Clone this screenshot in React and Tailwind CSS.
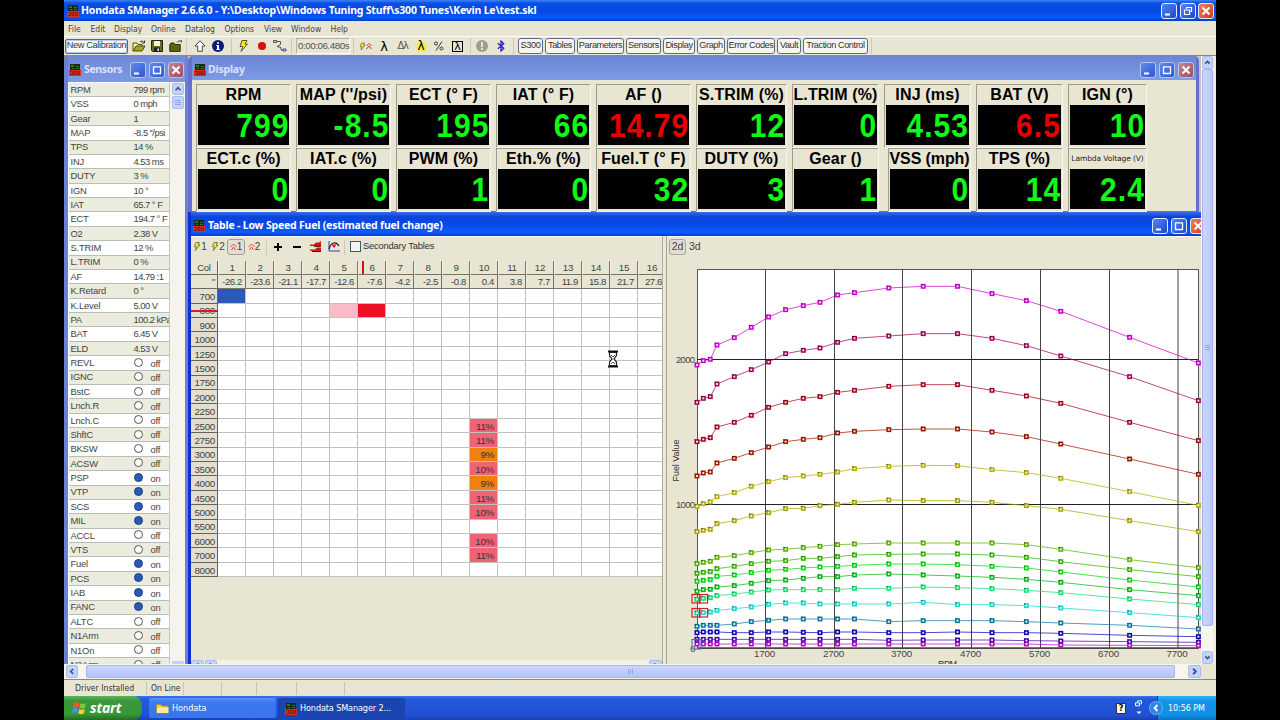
import React from "react";

const menus = [
  { label: "File", width: "w-[22.5px]" },
  { label: "Edit", width: "w-[23.5px]" },
  { label: "Display", width: "w-[37px]" },
  { label: "Online", width: "w-[34px]" },
  { label: "Datalog", width: "w-[39.5px]" },
  { label: "Options", width: "w-[39.5px]" },
  { label: "View", width: "w-[27px]" },
  { label: "Window", width: "w-[39.5px]" },
  { label: "Help", width: "w-[30px]" },
];

const toolButtons = [
  { label: "S300", width: "w-[25px]" },
  { label: "Tables", width: "w-[30px]" },
  { label: "Parameters", width: "w-[47px]" },
  { label: "Sensors", width: "w-[35px]" },
  { label: "Display", width: "w-[32px]" },
  { label: "Graph", width: "w-[28px]" },
  { label: "Error Codes", width: "w-[48px]" },
  { label: "Vault", width: "w-[24px]" },
  { label: "Traction Control", width: "w-[65px]" },
];

const sensors = [
  ["RPM", "799 rpm"],
  ["VSS", "0 mph"],
  ["Gear", "1"],
  ["MAP", "-8.5 ''/psi"],
  ["TPS", "14 %"],
  ["INJ", "4.53 ms"],
  ["DUTY", "3 %"],
  ["IGN", "10 °"],
  ["IAT", "65.7 ° F"],
  ["ECT", "194.7 ° F"],
  ["O2", "2.38 V"],
  ["S.TRIM", "12 %"],
  ["L.TRIM", "0 %"],
  ["AF", "14.79 :1"],
  ["K.Retard", "0 °"],
  ["K.Level", "5.00 V"],
  ["PA", "100.2 kPa"],
  ["BAT", "6.45 V"],
  ["ELD", "4.53 V"],
  ["REVL", false],
  ["IGNC", false],
  ["BstC", false],
  ["Lnch.R", false],
  ["Lnch.C", false],
  ["ShftC", false],
  ["BKSW", false],
  ["ACSW", false],
  ["PSP", true],
  ["VTP", true],
  ["SCS", true],
  ["MIL", true],
  ["ACCL", false],
  ["VTS", false],
  ["Fuel", true],
  ["PCS", true],
  ["IAB", true],
  ["FANC", true],
  ["ALTC", false],
  ["N1Arm", false],
  ["N1On", false],
  ["N2Arm", false],
];

// Each gauge column holds two readouts
const gauges = [
  { slot: "w-[100px]", box: "w-[95px]", items: [["RPM", "799"], ["ECT.c (%)", "0"]] },
  { slot: "w-[100px]", box: "w-[95px]", items: [["MAP (''/psi)", "-8.5"], ["IAT.c (%)", "0"]] },
  { slot: "w-[100px]", box: "w-[95px]", items: [["ECT (° F)", "195"], ["PWM (%)", "1"]] },
  { slot: "w-[100px]", box: "w-[95px]", items: [["IAT (° F)", "66"], ["Eth.% (%)", "0"]] },
  { slot: "w-[100px]", box: "w-[95px]", items: [["AF ()", "14.79", "red"], ["Fuel.T (° F)", "32"]] },
  { slot: "w-[96px]", box: "w-[91px]", items: [["S.TRIM (%)", "12"], ["DUTY (%)", "3"]] },
  { slot: "w-[92px]", box: "w-[87px]", items: [["L.TRIM (%)", "0"], ["Gear ()", "1"]] },
  { slot: "w-[92px]", box: "w-[87px]", items: [["INJ (ms)", "4.53"], ["VSS (mph)", "0"]] },
  { slot: "w-[92px]", box: "w-[87px]", items: [["BAT (V)", "6.5", "red"], ["TPS (%)", "14"]] },
  { slot: "w-[82px]", box: "w-[79px]", items: [["IGN (°)", "10"], ["Lambda Voltage (V)", "2.4"]] },
];

const loads = [
  "-26.2", "-23.6", "-21.1", "-17.7", "-12.6", "-7.6", "-4.2", "-2.5",
  "-0.8", "0.4", "3.8", "7.7", "11.9", "15.8", "21.7", "27.6",
];

const rpmRows = [
  700, 800, 900, 1000, 1250, 1500, 1750, 2000, 2250, 2500,
  2750, 3000, 3500, 4000, 4500, 5000, 5500, 6000, 7000, 8000,
];

const marked = {
  "700-1": { bg: "bg-[#2a5ab6]" },
  "800-5": { bg: "bg-[#f8bcc8]" },
  "800-6": { bg: "bg-[#ec1022]" },
  "2500-10": { bg: "bg-[#ee6474]", text: "11%" },
  "2750-10": { bg: "bg-[#ee6474]", text: "11%" },
  "3000-10": { bg: "bg-[#f08010]", text: "9%" },
  "3500-10": { bg: "bg-[#ee6474]", text: "10%" },
  "4000-10": { bg: "bg-[#f08010]", text: "9%" },
  "4500-10": { bg: "bg-[#ee6474]", text: "11%" },
  "5000-10": { bg: "bg-[#ee6474]", text: "10%" },
  "6000-10": { bg: "bg-[#ee6474]", text: "10%" },
  "7000-10": { bg: "bg-[#ee6474]", text: "11%" },
};

// Curve heights, in thirds of a pixel below `top`
const curves = [
  { color: "#c800d0", top: 230, v: [405, 392, 388, 345, 323, 292, 261, 239, 227, 217, 195, 188, 174, 169, 169, 191, 212, 244, 322, 399] },
  { color: "#a00058", top: 230, v: [517, 505, 500, 462, 440, 419, 396, 371, 361, 354, 337, 325, 318, 311, 311, 325, 347, 378, 440, 512] },
  { color: "#a80020", top: 230, v: [635, 628, 623, 591, 577, 556, 532, 517, 505, 500, 487, 481, 469, 464, 464, 481, 498, 520, 577, 632] },
  { color: "#a01400", top: 440, v: [108, 99, 96, 69, 55, 38, 21, 5, -2, -7, -21, -26, -31, -33, -33, -24, -10, 12, 57, 103] },
  { color: "#b4ac00", top: 440, v: [199, 191, 186, 170, 158, 139, 125, 113, 108, 103, 96, 86, 79, 76, 77, 89, 98, 115, 155, 196] },
  { color: "#a8a400", top: 440, v: [275, 271, 268, 251, 242, 228, 218, 206, 205, 197, 193, 187, 180, 182, 182, 187, 197, 208, 242, 275] },
  { color: "#58b000", top: 440, v: [371, 367, 364, 352, 347, 338, 330, 328, 323, 319, 314, 312, 309, 309, 309, 309, 314, 328, 359, 383] },
  { color: "#30b400", top: 440, v: [400, 397, 395, 386, 379, 371, 364, 362, 355, 355, 350, 345, 343, 342, 342, 345, 352, 365, 389, 410] },
  { color: "#00d810", top: 440, v: [424, 421, 419, 409, 405, 398, 391, 388, 384, 381, 379, 376, 372, 372, 374, 379, 384, 396, 420, 441] },
  { color: "#00b810", top: 440, v: [454, 449, 448, 441, 437, 430, 422, 420, 415, 410, 410, 405, 402, 405, 408, 412, 418, 427, 449, 467] },
  { color: "#10e070", top: 440, v: [478, 475, 473, 467, 462, 456, 450, 449, 449, 449, 449, 445, 445, 441, 443, 446, 451, 458, 477, 494] },
  { color: "#10d8d0", top: 440, v: [519, 518, 516, 511, 506, 501, 493, 489, 489, 492, 492, 492, 492, 487, 494, 494, 497, 504, 518, 533] },
  { color: "#0878a0", top: 440, v: [559, 556, 556, 556, 552, 545, 541, 537, 537, 537, 537, 537, 545, 542, 542, 542, 545, 549, 556, 567] },
  { color: "#0800c0", top: 440, v: [578, 576, 576, 576, 578, 578, 576, 576, 577, 578, 576, 576, 578, 578, 576, 578, 578, 580, 586, 590] },
  { color: "#4000b0", top: 440, v: [598, 598, 598, 598, 598, 598, 598, 598, 598, 598, 598, 598, 601, 600, 600, 600, 602, 603, 605, 607] },
  { color: "#b800c8", top: 440, v: [612, 612, 612, 612, 612, 612, 612, 612, 612, 612, 612, 612, 612, 612, 612, 612, 612, 615, 616, 617] },
];

const curveX = [
  697, 703.3, 710.3, 717, 734.3, 751.3, 768.6, 785.6, 803.3, 820,
  837.6, 854.5, 888.8, 923.2, 957.5, 992, 1026.4, 1060.8, 1129.6, 1198.4,
];

const xTicks = [
  [1700, 765.5],
  [2700, 834.5],
  [3700, 902.5],
  [4700, 971.5],
  [5700, 1040.5],
  [6700, 1109.5],
  [7700, 1178],
];

const AppIcon = ({ className = "w-3 h-3" }) => (
  <svg viewBox="0 0 12 12" className={`shrink-0 ${className}`}>
    <rect x="1" y="0" width="10" height="7" fill="#142c12" />
    <path d="M2 1h3v2H2zM7 2h3v1H7zM3 4h2v1H3zM7 4h3v1H7z" fill="#2c7430" />
    <rect x="0" y="6" width="12" height="6" fill="#d8301c" />
    <path d="M1 7.500h2.500v3H1M5 7.500h2v3H5zM8.500 7.500h2v3h-2z" fill="none" stroke="#7a1408" strokeWidth="0.8" />
  </svg>
);

const WinButton = ({ kind, dim }) => {
  const isClose = kind === "close";
  const color = isClose
    ? dim
      ? "from-[#c48494] to-[#a04c60]"
      : "from-[#ee8060] to-[#cc3a14]"
    : dim
      ? "from-[#6488ee] to-[#3058d0]"
      : "from-[#5484f4] to-[#1c48cc]";
  return (
    <div
      className={`w-4 h-4 shrink-0 rounded-[3px] border bg-gradient-to-br ${color} ${
        dim ? "border-[#b4c4f4]" : "border-[#e4ecfc]"
      }`}
    >
      <svg viewBox="0 0 14 14" className="w-full h-full" fill="none" stroke="#fff">
        {kind === "min" && <path d="M3 10.5h5" strokeWidth="2" />}
        {kind === "max" && <path d="M3 3.8h8M3.500 4v6.500h7V4" strokeWidth="1.300" />}
        {kind === "restore" && <path d="M5.500 5V3.500h5v4H9M3.500 6h5v4.500h-5z" strokeWidth="1.200" />}
        {isClose && <path d="M3.500 3.500l7 7M10.500 3.500l-7 7" strokeWidth="2" />}
      </svg>
    </div>
  );
};

const ScrollButton = ({ dir, className = "w-3 h-3" }) => {
  const paths = {
    up: "M3 7.5l3-3 3 3",
    down: "M3 4.5l3 3 3-3",
    left: "M7.5 3l-3 3 3 3",
    right: "M4.5 3l3 3-3 3",
  };
  return (
    <div className={`shrink-0 rounded-[2px] border border-[#a8bcf0] bg-[#c4d2fc] ${className}`}>
      <svg viewBox="0 0 12 12" className="w-full h-full" fill="none" stroke="#3c5290" strokeWidth="2">
        <path d={paths[dir]} />
      </svg>
    </div>
  );
};

const Slot = ({ width, children }) => (
  <div className={`flex h-full shrink-0 items-center justify-center ${width}`}>{children}</div>
);

const Sep = ({ width }) => (
  <Slot width={width}>
    <div className="h-4 w-px bg-[#cdc9b6]" />
  </Slot>
);

const Bolt = ({ className = "w-[11px] h-3" }) => (
  <svg viewBox="0 0 11 12" className={className}>
    <path d="M4 .5h5L7 4h2.500L3 11.500 4.800 6.500H2z" fill="#f6f000" stroke="#333" strokeWidth="0.8" />
  </svg>
);

const Folder = () => (
  <svg viewBox="0 0 14 12" className="w-[14px] h-3">
    <path d="M1 11V3h4l1 1.500h4V6" fill="#fbf6a0" stroke="#4c4c10" />
    <path d="M1 11l3-5h9l-3 5z" fill="#a8a418" stroke="#4c4c10" />
    <path d="M8 2c1.500-1.500 3-1 4 .5M12.500.5V3H10" fill="none" stroke="#222" strokeWidth="0.9" />
  </svg>
);

const Toolbar = () => (
  <div className="flex h-5 shrink-0 items-center border-t border-white border-b border-b-[#8c897c] font-['Liberation_Sans',Arial,sans-serif] text-[10px] text-[#333]">
    <div className="ml-px flex h-[15px] w-[63px] shrink-0 items-center justify-center whitespace-nowrap rounded-[2px] border border-[#3e6cb4] bg-[#fafaf8] text-[9.200px] tracking-[-0.350px] shadow-[inset_0_0_0_1px_#b4ccf4]">
      New Calibration
    </div>
    <div className="w-px shrink-0" />
    <Slot width="w-[19px]"><Folder /></Slot>
    <Slot width="w-[17px]">
      <svg viewBox="0 0 12 12" className="w-3 h-3">
        <path d="M.5.5h11v11H1.500l-1-1z" fill="#6a6c10" stroke="#222" />
        <rect x="3" y="1" width="6" height="5" fill="#eee" />
        <rect x="3" y="7.500" width="6" height="4" fill="#222" />
        <rect x="6.500" y="8.500" width="1.500" height="2.500" fill="#eee" />
      </svg>
    </Slot>
    <Slot width="w-[20px]">
      <svg viewBox="0 0 13 12" className="w-[13px] h-3">
        <path d="M.8 11.400V4.500L2 3h3l1 1.500h5.200v6.900z" fill="#5c6414" stroke="#2c300c" />
        <path d="M8 2.500C9 1 10 .8 12 1M12.300 0v2.600" fill="none" stroke="#333" strokeWidth="0.9" />
      </svg>
    </Slot>
    <Sep width="w-[3px]" />
    <Slot width="w-[23px]">
      <svg viewBox="0 0 12 12" className="w-3 h-3">
        <path d="M6 .8L11 6H8.300v5.300H3.700V6H1z" fill="#fff" stroke="#444" />
      </svg>
    </Slot>
    <Slot width="w-[14px]">
      <svg viewBox="0 0 12 12" className="w-3 h-3">
        <circle cx="6" cy="6" r="6" fill="#0a1a80" />
        <path d="M5 2.200h2v1.600H5zM4.300 5H7v4h1v1H4.300V9H5V6h-.7z" fill="#fff" />
      </svg>
    </Slot>
    <Sep width="w-[12px]" />
    <Slot width="w-[13px]"><Bolt /></Slot>
    <Slot width="w-[23px]"><div className="h-2 w-2 rounded-full bg-[#e00808]" /></Slot>
    <Slot width="w-[14px]">
      <svg viewBox="0 0 14 12" className="w-[14px] h-3" fill="none" stroke="#444" strokeWidth="0.9">
        <path d="M.5.5h3v2h-3zM3.500 1.500h4v3L4 6.500l4 1v2.500h2" />
        <path d="M10 9h3v2h-3z" stroke="#223a90" />
      </svg>
    </Slot>
    <Sep width="w-[9px]" />
    <div className="flex h-4 w-[54px] shrink-0 items-center whitespace-nowrap border border-[#b8b4a2] border-b-white border-r-white pl-px text-[9.800px] tracking-[-0.450px] text-[#555]">
      0:00:06.480s
    </div>
    <Sep width="w-[7px]" />
    <Slot width="w-[17px]">
      <Bolt className="w-[7px] h-[11px]" />
      <svg viewBox="0 0 6 8" className="w-[6px] h-2" fill="none" stroke="#d83030">
        <path d="M.5 4L3 1.500 5.500 4M.5 7L3 4l2.500 3" />
      </svg>
    </Slot>
    <Slot width="w-[20px]"><span className="font-['DejaVu_Sans',sans-serif] text-[13px] leading-none text-black">λ</span></Slot>
    <Slot width="w-[17px]"><span className="font-['DejaVu_Sans',sans-serif] text-[10px] leading-none tracking-[-1.500px] text-[#555]">Δλ</span></Slot>
    <Slot width="w-[20px]">
      <span className="flex h-[11px] w-[11px] items-center justify-center rounded-full bg-[#f2ee50] font-['DejaVu_Sans',sans-serif] text-[12px] leading-none text-black">λ</span>
    </Slot>
    <Slot width="w-[15px]">
      <svg viewBox="0 0 10 10" className="h-2.5 w-2.5" fill="none" stroke="#333">
        <circle cx="2" cy="2.500" r="1.500" /><path d="M8 .5l-6 9" /><circle cx="7.500" cy="7.500" r="1.500" />
      </svg>
    </Slot>
    <Slot width="w-[23px]">
      <span className="flex h-[11px] w-[11px] items-center justify-center border border-black font-['DejaVu_Sans',sans-serif] text-[11px] leading-none text-black">λ</span>
    </Slot>
    <Sep width="w-[3px]" />
    <Slot width="w-[20px]">
      <svg viewBox="0 0 12 12" className="w-3 h-3">
        <circle cx="6" cy="6" r="6" fill="#a09e94" />
        <path d="M5 2h2v5H5zM5 8h2v2H5z" fill="#e8e4d6" />
      </svg>
    </Slot>
    <Slot width="w-[17px]">
      <svg viewBox="0 0 8 12" className="h-3 w-2" fill="none" stroke="#1c1cc0" strokeWidth="1.200">
        <path d="M.8 3.200l6 5L4 11V1l2.800 2.800-6 5" />
      </svg>
    </Slot>
    <Sep width="w-2" />
    <div className="flex shrink-0 gap-[2px] pl-px">
      {toolButtons.map((b) => (
        <div
          key={b.label}
          className={`flex h-4 shrink-0 items-center justify-center whitespace-nowrap rounded-[3px] border border-[#5a6c84] bg-[#f6f5ef] text-[9.200px] tracking-[-0.420px] ${b.width}`}
        >
          {b.label}
        </div>
      ))}
    </div>
    <Sep width="w-[7px]" />
  </div>
);

const SensorsWindow = () => (
  <section className="flex h-full w-[124px] shrink-0 flex-col overflow-hidden rounded-t-[5px] bg-[#6c80d6] pl-1 pr-[3px]">
    <div className="flex h-[26px] shrink-0 items-center bg-gradient-to-b from-[#7088d8] to-[#7c98e4] pl-[1px] pt-[2px]">
      <AppIcon className="h-[12px] w-[12px]" />
      <span className="ml-[3px] w-[46px] font-['Noto_Sans',sans-serif] text-[10.500px] font-bold tracking-[-0.350px] text-[#dbe3fa]">Sensors</span>
      <div className="flex gap-[3px]">
        <WinButton kind="min" dim />
        <WinButton kind="max" dim />
        <WinButton kind="close" dim />
      </div>
    </div>
    <div className="flex min-h-0 flex-1 bg-white">
      <div className="w-[102px] shrink-0 overflow-hidden border-r border-[#c8c8c0] pl-px pt-[1px] font-['Liberation_Sans',Arial,sans-serif] text-[9.400px] leading-none tracking-[-0.200px] text-[#444]">
        {sensors.map(([name, value], i) => (
          <div
            key={name}
            className={`flex h-[14.390px] items-center whitespace-nowrap border-b border-[#bcbcb6] pl-[1.500px] ${
              i % 2 === 0 ? "bg-[#ebecdd]" : "bg-white"
            }`}
          >
            <span className="w-[63px] shrink-0">{name}</span>
            {typeof value === "string" ? (
              <span className="tracking-[-0.500px]">{value}</span>
            ) : (
              <>
                <span
                  className={`mb-px h-[9px] w-[9px] shrink-0 rounded-full border ${
                    value ? "border-[#1c3c80] bg-[#2a5ab6]" : "border-[#555] bg-white"
                  }`}
                />
                <span className="ml-[8px] pt-px">{value ? "on" : "off"}</span>
              </>
            )}
          </div>
        ))}
      </div>
      <div className="flex w-[15px] flex-col items-center gap-px bg-[#f4f3ec] pt-[1px]">
        <ScrollButton dir="up" className="h-3 w-3" />
        <div className="flex h-[13px] w-3 shrink-0 flex-col items-center justify-center gap-px rounded-[2px] border border-[#a8bcf0] bg-[#c4d2fc]">
          <div className="h-px w-1.5 bg-[#8ca4e4]" />
          <div className="h-px w-1.5 bg-[#8ca4e4]" />
          <div className="h-px w-1.5 bg-[#8ca4e4]" />
        </div>
        <div className="mb-0 mt-auto h-[3px] w-3 bg-[#c4d2fc]" />
      </div>
    </div>
  </section>
);

const Gauge = ({ label, value, red, box }) => {
  const tiny = label.startsWith("Lambda");
  const narrow = label.startsWith("VSS");
  return (
    <div
      className={`flex h-[64px] flex-col border border-[#a09c8c] border-b-[#f8f6ec] border-r-[#f8f6ec] pb-[2px] pl-px pr-px ${
        narrow ? "ml-1 w-[83px]" : box
      }`}
    >
      <div
        className={`flex h-5 shrink-0 items-center justify-center whitespace-nowrap pb-px ${
          tiny
            ? "font-['DejaVu_Sans',sans-serif] text-[7.500px] tracking-[-0.100px] text-[#222]"
            : narrow
              ? "font-['Liberation_Sans',Arial,sans-serif] text-[16px] font-bold tracking-[-0.100px] text-black"
              : "font-['Liberation_Sans',Arial,sans-serif] text-[16px] font-bold tracking-[0.150px] text-black"
        }`}
      >
        {label}
      </div>
      <div
        className={`flex min-h-0 flex-1 items-center justify-end bg-black font-['Liberation_Sans',Arial,sans-serif] text-[34px] font-bold leading-none tracking-[1.200px] ${
          red ? "text-[#e80000]" : "text-[#10f818]"
        }`}
      >
        <span className="origin-right scale-x-[0.88]">{value}</span>
      </div>
    </div>
  );
};

const DisplayWindow = () => (
  <section className="flex h-[156px] w-[1011px] shrink-0 flex-col overflow-hidden rounded-t-[5px] bg-[#6670cc] pb-px pl-[4px] pr-[3px]">
    <div className="flex h-[24px] shrink-0 items-center bg-gradient-to-b from-[#6c84d6] to-[#7c9ce6] pl-[2px] pr-[2px] pt-[3px]">
      <AppIcon />
      <span className="ml-[2px] flex-1 font-['Noto_Sans',sans-serif] text-[10.500px] font-bold tracking-[-0.200px] text-[#dbe3fa]">Display</span>
      <div className="flex gap-[3px]">
        <WinButton kind="min" dim />
        <WinButton kind="max" dim />
        <WinButton kind="close" dim />
      </div>
    </div>
    <div className="flex min-h-0 flex-1 bg-[#e9e5d3] pl-[4px] pt-1">
      {gauges.map((g) => (
        <div key={g.items[0][0]} className={`shrink-0 ${g.slot}`}>
          {g.items.map(([label, value, red]) => (
            <Gauge key={label} label={label} value={value} red={red} box={g.box} />
          ))}
        </div>
      ))}
    </div>
  </section>
);

const RpmGrid = () => (
  <div className="relative mt-[5px] w-[471px] shrink-0 overflow-hidden font-['Liberation_Sans',Arial,sans-serif] text-[9.800px] leading-none tracking-[-0.300px] text-[#444]">
    <div className="flex w-[480px]">
      <div className="flex h-[14px] w-[27px] shrink-0 items-center justify-center border-b border-r border-[#6c6a60] text-[9.500px]">Col</div>
      {loads.map((l, i) => (
        <div key={l} className="flex h-[14px] w-[28px] shrink-0 items-center justify-center border-b border-r border-[#77756a] border-l border-l-[#f6f4ea]">
          {i + 1}
        </div>
      ))}
    </div>
    <div className="flex w-[480px]">
      <div className="flex h-[14.300px] w-[27px] shrink-0 items-center justify-end border-b border-r border-[#6c6a60] pr-[2px]">''</div>
      {loads.map((l) => (
        <div key={l} className="flex h-[14.300px] w-[28px] shrink-0 items-center justify-end border-b border-r border-[#77756a] pr-[3px] pt-px text-[9.600px] tracking-[-0.400px]">
          {l}
        </div>
      ))}
    </div>
    {rpmRows.map((rpm) => (
      <div key={rpm} className="flex h-[14.400px] w-[480px]">
        <div className="flex w-[27px] shrink-0 items-center justify-end border-b border-r border-[#66645a] bg-[#e2dfd0] pr-[2px] pt-[2px]">
          {rpm}
        </div>
        {loads.map((l, i) => {
          const cell = marked[`${rpm}-${i + 1}`];
          return (
            <div
              key={l}
              className={`flex w-[28px] shrink-0 items-center justify-end border-b border-r border-[#c2c2c0] pr-[3px] pt-[2px] text-[#333] ${
                cell ? cell.bg : "bg-white"
              }`}
            >
              {cell?.text}
            </div>
          );
        })}
      </div>
    ))}
    {/* live position markers */}
    <div className="absolute left-[171px] top-0 h-[13px] w-[2px] bg-[#d81010]" />
    <div className="absolute left-0 top-[49px] h-[1.500px] w-[27px] bg-[#d02020]" />
  </div>
);

const FuelChart = () => (
  <svg
    viewBox="667 257 535 407"
    className="h-[407px] w-[535px] shrink-0 font-['Liberation_Sans',Arial,sans-serif] text-[10px]"
  >
    <rect x="697.500" y="269.500" width="501" height="379" fill="#fff" stroke="#555" strokeWidth="1" />
    {xTicks.map(([rpm, x]) => (
      <g key={rpm}>
        <line x1={x} x2={x} y1="269" y2="648" stroke="#444" strokeWidth="1" />
        <text x={x - 1} y="657" textAnchor="middle" fontSize="9.800" letterSpacing="-0.2" fill="#444">{rpm}</text>
      </g>
    ))}
    <path d="M697 359.500h501M697 504.500h501" stroke="#222" strokeWidth="1" />
    <path d="M697 648h501" stroke="#444" strokeWidth="1.500" />
    <text x="695" y="363" textAnchor="end" fontSize="9.500" textLength="19" fill="#444">2000</text>
    <text x="695" y="508" textAnchor="end" fontSize="9.500" textLength="19" fill="#444">1000</text>
    <text x="695.500" y="652" textAnchor="end" fontSize="9.500" fill="#444">0</text>
    <text transform="translate(678.500 481.500) rotate(-90)" fontSize="9" textLength="42" fill="#333">Fuel Value</text>
    <text x="938" y="667" fontSize="9" textLength="19" fill="#333">RPM</text>
    {curves.map((c) => (
      <g key={c.color}>
        <polyline
          points={c.v.map((v, i) => `${curveX[i]},${c.top + v / 3}`).join(" ")}
          fill="none"
          stroke={c.color}
          strokeWidth="0.9"
          opacity="0.8"
        />
        {c.v.map((v, i) => {
          const y = c.top + v / 3;
          return (
            <g key={i}>
              <rect x={curveX[i] - 1.7} y={y - 1.7} width="3.400" height="3.400" fill="#f4f4e8" stroke={c.color} strokeWidth="1.500" />
              <path d={`M${curveX[i] - 2.4} ${y - 1.9}h1.800`} stroke="#222" strokeWidth="0.800" opacity="0.700" />
            </g>
          );
        })}
      </g>
    ))}
    <g fill="none" stroke="#d82020" strokeWidth="1.200">
      <rect x="692" y="594.500" width="8" height="8.500" />
      <rect x="699.500" y="594.500" width="8" height="8.500" />
      <rect x="692" y="608.500" width="8" height="8.500" />
      <rect x="699.500" y="608.500" width="8" height="8.500" />
    </g>
    <rect x="692" y="639.500" width="9" height="9.500" fill="none" stroke="#3c6cc0" strokeWidth="1" />
  </svg>
);

const TableTool = ({ digit, children, active }) => (
  <div
    className={`flex h-[16px] shrink-0 items-center justify-center text-[10px] text-[#444] ${
      active ? "w-[18px] rounded-[3px] border border-[#a09e94] bg-[#e2dfd2]" : "w-[18px]"
    }`}
  >
    {children}
    {digit}
  </div>
);

const Chevrons = () => (
  <svg viewBox="0 0 7 8" className="h-2 w-[7px]" fill="none" stroke="#d84848">
    <path d="M.5 4l3-3 3 3M1.500 7l2-3 2 3" />
  </svg>
);

const TableWindow = () => (
  <section className="flex h-[452px] w-[1014px] shrink-0 flex-col overflow-hidden bg-[#0a30d8] pl-[3px]">
    <div className="flex h-[24px] shrink-0 items-center bg-[linear-gradient(#3a6cf0_0,#0a44dc_20%,#0848e4_50%,#0a5cfc_85%,#0838c0_100%)] pl-[2px] pt-[4px]">
      <AppIcon />
      <span className="ml-[3px] w-[944px] shrink-0 whitespace-nowrap font-['Noto_Sans',sans-serif] text-[10.500px] font-bold tracking-[-0.200px] text-white">
        Table - Low Speed Fuel (estimated fuel change)
      </span>
      <div className="flex gap-[3px]">
        <WinButton kind="min" />
        <WinButton kind="max" />
        <WinButton kind="close" />
      </div>
    </div>
    <div className="flex min-h-0 flex-1 bg-[#e9e5d3]">
      <div className="flex w-[471px] shrink-0 flex-col border-t border-white">
        <div className="flex h-[19px] shrink-0 items-center font-['Liberation_Sans',Arial,sans-serif] text-[10px] text-[#333]">
          <TableTool digit="1"><Bolt className="h-[11px] w-2" /></TableTool>
          <TableTool digit="2"><Bolt className="h-[11px] w-2" /></TableTool>
          <TableTool digit="1" active><Chevrons /></TableTool>
          <TableTool digit="2"><Chevrons /></TableTool>
          <Sep width="w-[6px]" />
          <Slot width="w-[18px]"><svg viewBox="0 0 8 8" className="h-2 w-2"><path d="M4 0v8M0 4h8" stroke="#000" strokeWidth="2" /></svg></Slot>
          <Slot width="w-[19px]"><svg viewBox="0 0 8 8" className="h-2 w-2"><path d="M0 4h8" stroke="#000" strokeWidth="2" /></svg></Slot>
          <Slot width="w-[19px]">
            <svg viewBox="0 0 12 11" className="h-[11px] w-3">
              <path d="M0 3.500h4l2-2h3l2-1.500v5H0z" fill="#d01818" />
              <path d="M0 8.500h5l2-2h4V10H0z" fill="#d01818" />
              <path d="M4 5.300h7M2 10.500h9" stroke="#400" />
            </svg>
          </Slot>
          <Slot width="w-[17px]">
            <svg viewBox="0 0 12 11" className="h-[11px] w-3" fill="none">
              <path d="M1 0v10h11" stroke="#3040a0" />
              <path d="M1 8c2-7 7-8 10-3" stroke="#222" strokeWidth="1.200" />
              <path d="M3.500 3.500h5L6 7z" fill="#d01818" />
            </svg>
          </Slot>
          <Sep width="w-1" />
          <div className="ml-[4px] h-[11px] w-[11px] shrink-0 border border-[#3c5878] bg-[#f4f4f0]" />
          <span className="ml-[2px] whitespace-nowrap text-[9.400px] tracking-[-0.200px]">Secondary Tables</span>
        </div>
        <RpmGrid />
        <div className="mt-auto flex h-[4px] shrink-0 overflow-hidden bg-[#f2f1e8]">
          <ScrollButton dir="left" className="h-[12px] w-[13px]" />
          <ScrollButton dir="right" className="ml-px h-[12px] w-[12px]" />
          <ScrollButton dir="right" className="ml-auto h-[12px] w-[13px]" />
        </div>
      </div>
      <div className="w-[5px] shrink-0 border-l border-r border-l-[#b0ac9a] border-r-[#a8a492] bg-[#ece8da]" />
      <div className="flex w-[535px] shrink-0 flex-col border-t border-white">
        <div className="flex h-5 shrink-0 items-center pb-px font-['Liberation_Sans',Arial,sans-serif] text-[10.500px] text-[#444]">
          <div className="ml-[2px] flex h-4 w-[17px] items-center justify-center rounded-[3px] border border-[#a8a698] bg-[#e0ddcf]">2d</div>
          <span className="ml-[3px]">3d</span>
        </div>
        <FuelChart />
      </div>
    </div>
  </section>
);

const Statusbar = () => (
  <div className="flex h-[17px] shrink-0 items-center border-t border-[#8c897c] bg-[#e9e5d3] font-['DejaVu_Sans_Condensed','DejaVu_Sans',sans-serif] text-[8.600px] text-[#333]">
    <div className="ml-[1px] flex h-[13px] w-[82px] items-center border-r border-[#c8c4b2] pl-[10px] pt-px">Driver Installed</div>
    <div className="flex h-[13px] w-[37px] items-center whitespace-nowrap border-r border-[#c8c4b2] pl-[4px] pt-px">On Line</div>
    <div className="h-[13px] w-[38px] border-r border-[#c8c4b2]" />
    <div className="h-[13px] w-[35px] border-r border-[#c8c4b2]" />
    <div className="h-[13px] w-[40px] border-r border-[#c8c4b2]" />
    <div className="h-[13px] w-[48px] border-r border-[#c8c4b2]" />
  </div>
);

const Taskbar = () => (
  <div className="flex h-6 shrink-0 items-stretch bg-[linear-gradient(#3c78e8_0,#2458dc_12%,#2050d4_80%,#1840b0_100%)] font-['DejaVu_Sans_Condensed','DejaVu_Sans',sans-serif] text-[9px] text-white">
    <div className="flex w-[78px] shrink-0 items-center rounded-r-[9px] bg-[linear-gradient(#5cb45c_0,#3a963c_20%,#389838_75%,#246c24_100%)] pl-[8px]">
      <svg viewBox="0 0 16 14" className="h-[14px] w-4">
        <path d="M2 2c2-1 3.500-1 5.500 0l-1 4.500c-2-1-3.500-1-5.500 0z" fill="#f0582c" />
        <path d="M8.500 2.300c2 1 3.500 1 5.500 0l-1 4.500c-2 1-3.500 1-5.500 0z" fill="#7cc83c" />
        <path d="M1 7.500c2-1 3.500-1 5.300 0l-1 4.500c-2-1-3.300-1-5.300 0z" fill="#4c8cf0" />
        <path d="M7.300 8c2 1 3.500 1 5.500 0l-1 4.500c-2 1-3.500 1-5.500 0z" fill="#fccc30" />
      </svg>
      <span className="ml-[2px] font-['Open_Sans',sans-serif] text-[14px] font-bold italic leading-none tracking-[-0.200px]">start</span>
    </div>
    <div className="my-[2px] ml-[7px] flex w-[127px] shrink-0 items-center rounded-[2px] bg-[linear-gradient(#5c96f8_0,#3c78f0_20%,#3874ec_100%)] pl-[7px] pt-px">
      <svg viewBox="0 0 13 11" className="h-[11px] w-[13px]">
        <path d="M.5 10V1.500h4L6 3h6v7z" fill="#f0cc50" stroke="#b08c20" strokeWidth="0.800" />
        <path d="M1 10V4.500h11.500V10z" fill="#fcec98" />
      </svg>
      <span className="ml-[3px]">Hondata</span>
    </div>
    <div className="my-[2px] ml-[2px] flex w-[127px] shrink-0 items-center rounded-[2px] bg-[#1c44b0] pl-[7px] pt-px">
      <AppIcon />
      <span className="ml-[3px] whitespace-nowrap tracking-[-0.100px]">Hondata SManager 2...</span>
    </div>
    <div className="ml-auto flex items-center">
      <div className="flex h-[11px] w-[10px] items-center justify-center border border-[#333] bg-[#fcfae4] text-[9px] font-bold leading-none text-black">?</div>
      <svg viewBox="0 0 10 16" className="ml-[8px] mr-[13px] h-4 w-[10px]">
        <path d="M3.500 2V.8h4v3H6.500M1.500 2.800h4v3h-4z" fill="none" stroke="#fff" />
        <path d="M2.500 11.500h5L5 14z" fill="#fff" />
      </svg>
    </div>
    <div className="flex w-[59px] shrink-0 items-center border-l border-[#0c3c9c] bg-[linear-gradient(#34b0f4_0,#1494e8_20%,#1090e4_80%,#0c70c0_100%)]">
      <svg viewBox="0 0 14 14" className="-ml-[9px] h-[14px] w-[14px] shrink-0">
        <circle cx="7" cy="7" r="6.500" fill="#2c84e4" stroke="#7cc0f8" strokeWidth="0.800" />
        <path d="M8.500 4l-3 3 3 3" fill="none" stroke="#fff" strokeWidth="1.800" />
      </svg>
      <span className="ml-[5px] whitespace-nowrap pt-px text-[8.800px]">10:56 PM</span>
    </div>
  </div>
);

const App = () => {
  return (
    <div className="h-[720px] w-[1280px] overflow-hidden bg-black px-[64px]">
      <main className="relative flex h-full w-[1152px] flex-col overflow-hidden bg-[#e9e5d3]">
        <header className="flex h-[21px] shrink-0 items-center bg-[linear-gradient(#3c84f8_0,#0a50e4_15%,#0648e0_50%,#0458fc_85%,#0438c0_100%)] pl-[3px] pr-[2px]">
          <AppIcon />
          <h1 className="ml-[2px] flex-1 whitespace-nowrap font-['Noto_Sans',sans-serif] text-[10.500px] font-bold leading-none tracking-[-0.200px] text-white">
            Hondata SManager 2.6.6.0 - Y:\Desktop\Windows Tuning Stuff\s300 Tunes\Kevin Le\test.skl
          </h1>
          <div className="flex gap-[2.500px]">
            <WinButton kind="min" />
            <WinButton kind="restore" />
            <WinButton kind="close" />
          </div>
        </header>

        <nav className="flex h-[15px] shrink-0 items-center pl-[4px] pt-[2px] font-['DejaVu_Sans_Condensed','DejaVu_Sans',sans-serif] text-[8.500px] text-[#444]">
          {menus.map((m) => (
            <span key={m.label} className={`shrink-0 ${m.width}`}>{m.label}</span>
          ))}
        </nav>

        <Toolbar />

        <div className="flex h-[608px] shrink-0 overflow-hidden bg-[#86847c]">
          <SensorsWindow />
          <div className="flex w-[1013px] shrink-0 flex-col overflow-hidden bg-[#c4c2ba]">
            <DisplayWindow />
            <TableWindow />
          </div>
          <div className="w-px shrink-0 bg-[#f6f5ee]" />
          <div className="flex w-[11px] shrink-0 flex-col bg-[#f6f5ee]">
            <ScrollButton dir="up" className="h-[13px] w-[11px]" />
            <div className="flex h-[557px] shrink-0 flex-col items-center justify-center gap-px rounded-[2px] border border-[#a4b4ec] bg-[linear-gradient(90deg,#cad6fe,#b8c8f8)]">
              <div className="h-px w-[5px] bg-[#94a8e4]" />
              <div className="h-px w-[5px] bg-[#94a8e4]" />
              <div className="h-px w-[5px] bg-[#94a8e4]" />
            </div>
            <ScrollButton dir="down" className="mt-auto h-[13px] w-[11px]" />
          </div>
          <div className="flex-1 bg-[#eeebdd]" />
        </div>

        <div className="flex h-[15px] shrink-0 items-center bg-[#e9e5d3] pr-[15px]">
          <div className="flex h-full flex-1 items-center bg-[#f6f5ee] pl-[2px]">
            <ScrollButton dir="left" className="h-[13px] w-[12px]" />
            <div className="ml-[8px] flex h-[13px] w-[1089px] items-center justify-center gap-px rounded-[2px] border border-[#a4b4ec] bg-[linear-gradient(#cad6fe,#b4c4f8)]">
              <div className="h-[5px] w-px bg-[#94a8e4]" />
              <div className="h-[5px] w-px bg-[#94a8e4]" />
              <div className="h-[5px] w-px bg-[#94a8e4]" />
            </div>
            <ScrollButton dir="right" className="ml-auto h-[13px] w-[13px]" />
          </div>
        </div>

        <Statusbar />
        <Taskbar />

        {/* busy cursor */}
        <svg viewBox="0 0 12 18" className="absolute left-[543px] top-[350px] h-[18px] w-3">
          <path d="M1 1.500h10M1 16.500h10" stroke="#111" strokeWidth="1.800" />
          <path d="M2.500 2.500v3L5 9l-2.500 3v3.500h7V12L7 9l2.500-3.500v-3z" fill="#fff" stroke="#222" strokeWidth="1.200" />
          <path d="M4 5l2 2 2-2M4 14l2-2 2 2" fill="none" stroke="#444" strokeWidth="0.900" />
        </svg>
      </main>
    </div>
  );
};

export default App;
